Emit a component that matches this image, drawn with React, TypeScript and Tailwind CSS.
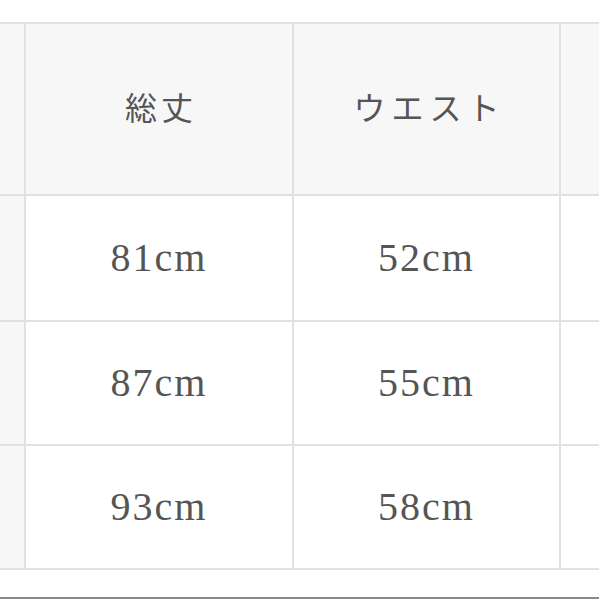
const rows = [
  ["81cm", "52cm"],
  ["87cm", "55cm"],
  ["93cm", "58cm"],
];

const font = { fontFamily: '"Liberation Serif", "Noto Sans CJK JP", serif' };

export default function App() {
  return (
    <div className="w-[599px] h-[599px] bg-white overflow-hidden flex flex-col" style={font}>
      <div className="mt-[22px] bg-[#e1e1e1] py-[2px] grid grid-cols-[24px_266px_265px_1fr] grid-rows-[170px_124px_122px_122px] gap-[2px] text-[#555]">
        <div className="bg-[#f7f7f7]" />
        <div className="bg-[#f7f7f7] flex items-center justify-center text-[32px] tracking-[4px] pl-[4px]">
          総丈
        </div>
        <div className="bg-[#f7f7f7] flex items-center justify-center text-[32px] tracking-[6px] pl-[6px]">
          ウエスト
        </div>
        <div className="bg-[#f7f7f7]" />
        {rows.map((r, i) => (
          <>
            <div key={`a${i}`} className="bg-[#f7f7f7]" />
            <div key={`b${i}`} className="bg-white flex items-center justify-center text-[40px] tracking-[2px]">
              {r[0]}
            </div>
            <div key={`c${i}`} className="bg-white flex items-center justify-center text-[40px] tracking-[2px]">
              {r[1]}
            </div>
            <div key={`d${i}`} className="bg-white" />
          </>
        ))}
      </div>
      <div className="mt-[27px] h-[2px] bg-[#8a8a8a]" />
    </div>
  );
}
